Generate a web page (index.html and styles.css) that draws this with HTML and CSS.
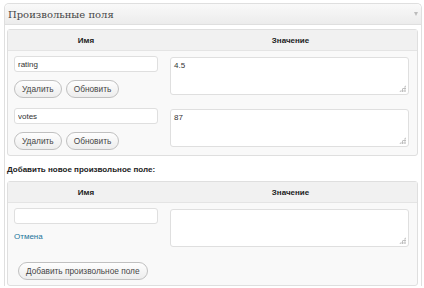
FILE: index.html
```html
<!DOCTYPE html>
<html lang="ru">
<head>
    <meta charset="UTF-8">
    <title>Произвольные поля</title>
    <link rel="stylesheet" href="styles.css">
</head>
<body>
    <div class="postbox">
        <div class="hndle">
            <span>Произвольные поля</span>
            <span class="toggle"></span>
        </div>
        <div class="inside">
            <div class="meta-table">
                <div class="meta-head">
                    <div class="col-key">Имя</div>
                    <div class="col-value">Значение</div>
                </div>
                <div class="meta-row">
                    <div class="col-key">
                        <input type="text" value="rating">
                        <div class="actions">
                            <button type="button">Удалить</button>
                            <button type="button">Обновить</button>
                        </div>
                    </div>
                    <div class="col-value">
                        <div class="value-box"><textarea>4.5</textarea></div>
                    </div>
                </div>
                <div class="meta-row">
                    <div class="col-key">
                        <input type="text" value="votes">
                        <div class="actions">
                            <button type="button">Удалить</button>
                            <button type="button">Обновить</button>
                        </div>
                    </div>
                    <div class="col-value">
                        <div class="value-box"><textarea>87</textarea></div>
                    </div>
                </div>
            </div>

            <p class="add-title">Добавить новое произвольное поле:</p>

            <div class="meta-table">
                <div class="meta-head">
                    <div class="col-key">Имя</div>
                    <div class="col-value">Значение</div>
                </div>
                <div class="meta-row">
                    <div class="col-key">
                        <input type="text" value="">
                        <a href="#" class="cancel">Отмена</a>
                    </div>
                    <div class="col-value">
                        <div class="value-box"><textarea></textarea></div>
                    </div>
                </div>
                <div class="submit-row">
                    <button type="button">Добавить произвольное поле</button>
                </div>
            </div>
        </div>
    </div>
</body>
</html>
```

FILE: styles.css
```css
body {
    margin: 0;
    background: #fff;
    font-family: "Liberation Sans", Arial, sans-serif;
    font-size: 8px;
    color: #333;
}

.postbox {
    margin: 3px 2px 0 4px;
    border: 1px solid #dfdfdf;
    border-bottom: none;
    border-radius: 5px 5px 0 0;
    background: #fff;
}

.hndle {
    height: 20px;
    display: flex;
    align-items: center;
    justify-content: space-between;
    padding: 0 3px;
    background: linear-gradient(#f9f9f9, #ececec);
    border-bottom: 1px solid #dfdfdf;
    border-radius: 5px 5px 0 0;
    font-family: "DejaVu Serif", Georgia, serif;
    font-size: 10px;
    color: #464646;
}

.toggle {
    width: 0;
    height: 0;
    border-left: 2.5px solid transparent;
    border-right: 2.5px solid transparent;
    border-top: 4px solid #bcbcbc;
}

.inside {
    padding: 4px 3px 0 2px;
}

.meta-table {
    border: 1px solid #dfdfdf;
    border-radius: 3px;
    background: #f9f9f9;
}

.meta-head,
.meta-row {
    display: grid;
    grid-template-columns: 156px 1fr;
}

.meta-head {
    height: 20px;
    align-items: center;
    text-align: center;
    background: #f1f1f1;
    border-bottom: 1px solid #e4e4e4;
    font-weight: bold;
    color: #222;
}

.meta-row .col-key {
    padding: 5px 6px;
}

.meta-row .col-value {
    padding: 6px 8px 5px 6px;
}

input[type="text"] {
    display: block;
    width: 100%;
    height: 16px;
    box-sizing: border-box;
    margin: 0;
    padding: 0 3px;
    border: 1px solid #dfdfdf;
    border-radius: 3px;
    background: #fff;
    font-family: inherit;
    font-size: 8px;
    color: #333;
}

.value-box {
    position: relative;
}

/* dotted grip in the corner */
.value-box::after {
    content: "";
    position: absolute;
    right: 3px;
    bottom: 3px;
    width: 7px;
    height: 7px;
    background-image: radial-gradient(circle, #b8b8b8 0.8px, transparent 1px);
    background-size: 2.4px 2.4px;
    clip-path: polygon(100% 0, 100% 100%, 0 100%);
}

textarea {
    display: block;
    width: 100%;
    height: 38px;
    box-sizing: border-box;
    margin: 0;
    padding: 3px;
    border: 1px solid #dfdfdf;
    border-radius: 3px;
    background: #fff;
    font-family: inherit;
    font-size: 8px;
    color: #333;
    resize: none;
}

.actions {
    display: flex;
    gap: 4px;
    margin-top: 8px;
}

button {
    height: 18px;
    padding: 0 7px;
    border: 1px solid #c0c0c0;
    border-radius: 10px;
    background: linear-gradient(#fefefe, #ededed);
    font-family: inherit;
    font-size: 8.3px;
    color: #464646;
}

.cancel {
    display: block;
    margin-top: 8px;
    color: #21759b;
    text-decoration: none;
}

.submit-row {
    padding: 10px 0 5px 10px;
}

.add-title {
    margin: 7px 0 5px 0;
    font-weight: bold;
    line-height: 13px;
    color: #222;
}
```
